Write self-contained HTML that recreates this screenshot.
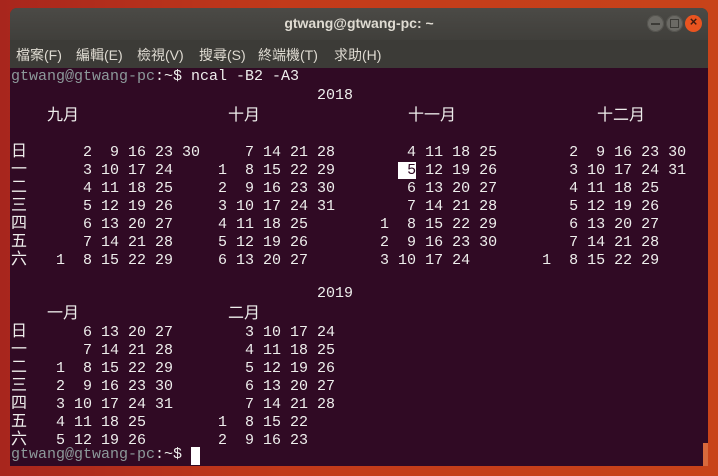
<!DOCTYPE html>
<html><head><meta charset="utf-8"><style>
html,body{margin:0;padding:0;width:718px;height:476px;overflow:hidden;background:linear-gradient(90deg,#a8261d 0%,#c23a1a 40%,#c8431a 100%);}
.win{position:absolute;left:10px;top:8px;width:698px;height:458px;background:#3c3b37;border-radius:7px 7px 0 0;overflow:hidden;}
.title{position:absolute;left:0;top:0;width:698px;height:32px;background:linear-gradient(#4b4a46,#403f3b);}
.title span{position:absolute;left:0;width:698px;top:7px;text-align:center;color:#dfdbd2;font:bold 14px "Liberation Sans",sans-serif;}
.btn{position:absolute;top:7px;width:17px;height:17px;border-radius:50%;background:#6b6a65;box-shadow:inset 0 0 0 1px #55544f;}
.menu{position:absolute;left:0;top:32px;width:698px;height:28px;background:#3c3b37;}
.menu span{position:absolute;top:5px;color:#dfdbd2;font:14px "Liberation Sans","Noto Sans CJK TC",sans-serif;}
.term{position:absolute;left:0;top:60px;width:698px;height:398px;background:#300a24;}
.l{position:absolute;left:1px;white-space:pre;font:15px/18px "Liberation Mono",monospace;color:#eeeeec;}
.c{display:inline-block;width:18px;font-family:"Noto Sans CJK TC",sans-serif;font-size:16px;text-align:left;}
.p{color:#8d9a9b}
.hl{background:#fff;color:#300a24}
.m{position:absolute;font:16px/18px "Noto Sans CJK TC",sans-serif;color:#eeeeec;}
</style></head><body>
<div class="win">
<div class="title"><span>gtwang@gtwang-pc: ~</span>
<div class="btn" style="left:637px"><div style="position:absolute;left:4px;top:8px;width:9px;height:1.5px;background:#3c3b37"></div></div>
<div class="btn" style="left:656px"><div style="position:absolute;left:4px;top:4px;width:7px;height:7px;border:1.5px solid #3c3b37"></div></div>
<div class="btn" style="left:675px;background:#e95420;box-shadow:none"><span style="position:absolute;left:0;top:-1px;width:17px;text-align:center;color:#3c1a10;font:bold 13px 'Liberation Sans',sans-serif">×</span></div>
</div>
<div class="menu">
<span style="left:6px">檔案(F)</span><span style="left:66px">編輯(E)</span><span style="left:127px">檢視(V)</span><span style="left:189px">搜尋(S)</span><span style="left:248px">終端機(T)</span><span style="left:324px">求助(H)</span>
</div>
<div class="term">
<div class="l" style="top:0px"><span class="p">gtwang@gtwang-pc</span>:~$ ncal -B2 -A3</div>
<div class="l" style="top:19px">                                  2018</div>
<div class="m" style="left:37px;top:36px">九月</div>
<div class="m" style="left:218px;top:36px">十月</div>
<div class="m" style="left:398px;top:36px">十一月</div>
<div class="m" style="left:587px;top:36px">十二月</div>
<div class="l" style="top:72px"><span class="c">日</span>      2  9 16 23 30     7 14 21 28        4 11 18 25        2  9 16 23 30</div>
<div class="l" style="top:90px"><span class="c">一</span>      3 10 17 24     1  8 15 22 29       <span class="hl"> 5</span> 12 19 26        3 10 17 24 31</div>
<div class="l" style="top:108px"><span class="c">二</span>      4 11 18 25     2  9 16 23 30        6 13 20 27        4 11 18 25</div>
<div class="l" style="top:126px"><span class="c">三</span>      5 12 19 26     3 10 17 24 31        7 14 21 28        5 12 19 26</div>
<div class="l" style="top:144px"><span class="c">四</span>      6 13 20 27     4 11 18 25        1  8 15 22 29        6 13 20 27</div>
<div class="l" style="top:162px"><span class="c">五</span>      7 14 21 28     5 12 19 26        2  9 16 23 30        7 14 21 28</div>
<div class="l" style="top:180px"><span class="c">六</span>   1  8 15 22 29     6 13 20 27        3 10 17 24        1  8 15 22 29</div>
<div class="l" style="top:217px">                                  2019</div>
<div class="m" style="left:37px;top:234px">一月</div>
<div class="m" style="left:218px;top:234px">二月</div>
<div class="l" style="top:252px"><span class="c">日</span>      6 13 20 27        3 10 17 24</div>
<div class="l" style="top:270px"><span class="c">一</span>      7 14 21 28        4 11 18 25</div>
<div class="l" style="top:288px"><span class="c">二</span>   1  8 15 22 29        5 12 19 26</div>
<div class="l" style="top:306px"><span class="c">三</span>   2  9 16 23 30        6 13 20 27</div>
<div class="l" style="top:324px"><span class="c">四</span>   3 10 17 24 31        7 14 21 28</div>
<div class="l" style="top:342px"><span class="c">五</span>   4 11 18 25        1  8 15 22</div>
<div class="l" style="top:360px"><span class="c">六</span>   5 12 19 26        2  9 16 23</div>
<div class="l" style="top:378px"><span class="p">gtwang@gtwang-pc</span>:~$ </div>
<div style="position:absolute;left:181px;top:379px;width:9px;height:18px;background:#fff"></div>
<div style="position:absolute;left:693px;top:375px;width:5px;height:23px;background:#d8693c"></div>
</div>
</div>
</body></html>
